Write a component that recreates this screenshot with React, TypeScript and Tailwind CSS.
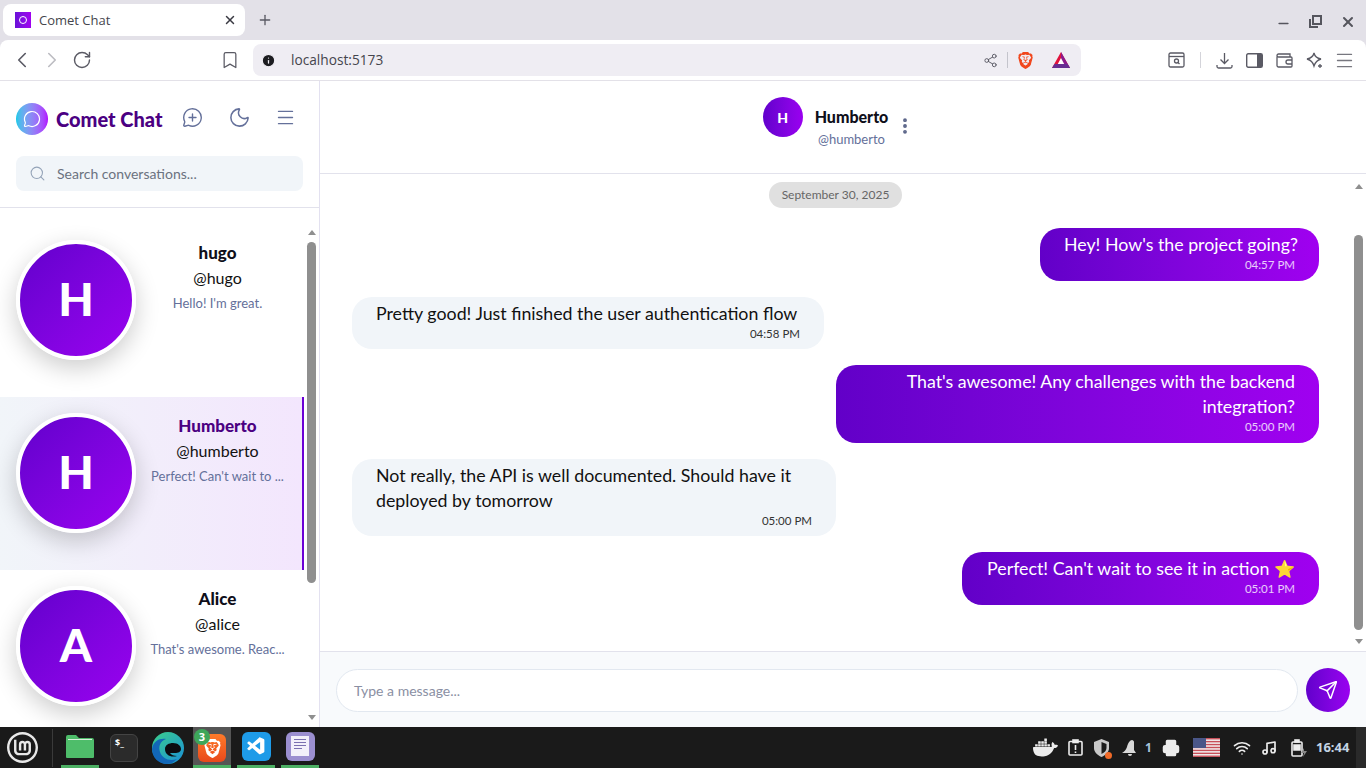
import { ChevronLeft, ChevronRight, Bookmark, Info, Menu, MessageCircle, MessageCirclePlus, Minus, Moon, MoreVertical, Music, Plus, Printer, RotateCw, Search, Send, Share2, Wifi, X } from 'lucide-react'
import { SiBrave, SiDocker, SiLinuxmint } from 'react-icons/si'
import { VscVscode } from 'react-icons/vsc'

interface Conversation {
  name: string
  handle: string
  last: string
  active?: boolean
}

interface Message {
  text: React.ReactNode
  time: string
  mine: boolean
  width: string
}

const conversations: Conversation[] = [
  { name: 'hugo', handle: '@hugo', last: "Hello! I'm great." },
  { name: 'Humberto', handle: '@humberto', last: "Perfect! Can't wait to ...", active: true },
  { name: 'Alice', handle: '@alice', last: "That's awesome. Reac..." },
]

const messages: Message[] = [
  { text: "Hey! How's the project going?", time: '04:57 PM', mine: true, width: 'w-[279px]' },
  { text: 'Pretty good! Just finished the user authentication flow', time: '04:58 PM', mine: false, width: 'w-[472px]' },
  { text: <>That's awesome! Any challenges with the backend<br />integration?</>, time: '05:00 PM', mine: true, width: 'w-[483px]' },
  { text: <>Not really, the API is well documented. Should have it<br />deployed by tomorrow</>, time: '05:00 PM', mine: false, width: 'w-[484px]' },
  { text: <>Perfect! Can't wait to see it in action <span className="text-[17px]">⭐</span></>, time: '05:01 PM', mine: true, width: 'w-[357px]' },
]

function ToolIcon({ children }: { children: React.ReactNode }) {
  return <div className="w-[30px] h-[30px] flex items-center justify-center text-[#5a5a64] shrink-0">{children}</div>
}

function BatIcon() {
  return (
    <svg width="18" height="16" viewBox="0 0 18 16">
      <path d="M9 0 L18 16 H0 Z" fill="#e0123c" />
      <path d="M9 0 L18 16 H13 L9 8 Z" fill="#8a1a8c" />
      <path d="M0 16 L2.5 12 H15.5 L18 16 Z" fill="#662d91" />
      <path d="M9 6 L12.2 12 H5.8 Z" fill="#fff" />
    </svg>
  )
}

function Flag() {
  const stripes = [0, 1, 2, 3, 4, 5, 6]
  return (
    <svg width="27" height="19" viewBox="0 0 27 19">
      <rect width="27" height="19" fill="#f4f4f4" />
      {stripes.map(i => <rect key={i} y={i * 2.92} width="27" height="1.46" fill="#c8505a" />)}
      <rect width="13" height="10" fill="#4a5688" />
    </svg>
  )
}

function Scrollbar({ topClass, thumbClass, pad }: { topClass: string; thumbClass: string; pad: string }) {
  return (
    <div className={`w-[15px] shrink-0 flex flex-col items-center ${pad}`}>
      <div className="w-0 h-0 border-x-[4px] border-x-transparent border-b-[5px] border-b-[#8f8f8f]" />
      <div className={`w-[9px] rounded-full bg-[#8f8f8f] ${topClass} ${thumbClass}`} />
      <div className="mt-auto w-0 h-0 border-x-[4px] border-x-transparent border-t-[5px] border-t-[#8f8f8f]" />
    </div>
  )
}

function ConversationItem({ item }: { item: Conversation }) {
  return (
    <div className={`h-[173px] shrink-0 flex pl-4 pt-4 ${item.active ? 'bg-linear-to-r from-[#f1f5f9] to-[#f3e6fd] border-r-2 border-r-[#6a00d5]' : ''}`}>
      <div className="w-[120px] h-[120px] shrink-0 rounded-full border-4 border-white bg-linear-to-br from-[#6200cc] to-[#9a00f0] shadow-[0_8px_24px_rgba(0,0,0,0.2)] flex items-center justify-center text-white text-[46px] leading-none pb-0.5 font-black">
        {item.name[0].toUpperCase()}
      </div>
      <div className="ml-3 w-[139px] pt-px text-center whitespace-nowrap">
        <div className={`text-[17px] leading-6 font-black ${item.active ? 'text-[#4b0082]' : 'text-[#0f0f1a]'}`}>{item.name}</div>
        <div className="mt-px text-[16px] leading-6 text-[#111]">{item.handle}</div>
        <div className="mt-[3px] text-[13px] leading-5 text-[#64709a]">{item.last}</div>
      </div>
    </div>
  )
}

function Bubble({ msg }: { msg: Message }) {
  return (
    <div
      className={`${msg.width} shrink-0 rounded-[20px] px-6 pt-[4px] pb-[7.5px] ${
        msg.mine
          ? 'self-end bg-linear-to-r from-[#6200c8] to-[#a000f0] text-white text-right'
          : 'self-start bg-[#f1f5f9] text-[#111]'
      }`}
    >
      <div className="text-[17.8px] leading-[25px] whitespace-nowrap">{msg.text}</div>
      <div className={`text-[11.5px] leading-4 text-right ${msg.mine ? 'text-white/80' : 'text-[#333]'}`}>{msg.time}</div>
    </div>
  )
}

export default function App() {
  return (
    <div className="h-screen w-[1366px] overflow-hidden flex flex-col bg-[#e3e1e8] font-['Lato','Noto_Sans',sans-serif]">
      {/* tab strip */}
      <div className="h-10 shrink-0 flex items-start pt-1 pl-[3px] font-['Open_Sans',sans-serif]">
        <div className="w-[242px] h-8 rounded-lg bg-white flex items-center pl-3 pr-2">
          <div className="w-4 h-4 bg-linear-to-r from-[#6a10d8] to-[#a000f0] flex items-center justify-center">
            <div className="w-2 h-2 rounded-full border border-white" />
          </div>
          <span className="ml-2 text-[13px] text-[#45454d] pt-0.5">Comet Chat</span>
          <X size={14} strokeWidth={2.5} className="ml-auto text-[#3a3a42]" />
        </div>
        <Plus size={16} className="ml-3 mt-2 text-[#5a5a64]" />
        <div className="ml-auto flex items-center gap-[18px] pr-[10px] pt-2 text-[#55555d]">
          <Minus size={15} strokeWidth={2.5} className="mt-1" />
          <svg width="13" height="13" viewBox="0 0 13 13" fill="none" stroke="currentColor" strokeWidth="2">
            <rect x="4" y="1" width="8" height="8" />
            <path d="M1 4v8h8" />
          </svg>
          <X size={16} strokeWidth={3} />
        </div>
      </div>

      {/* browser toolbar */}
      <div className="h-[41px] shrink-0 bg-white rounded-t-lg border-b border-[#e3e1e8] flex items-center pl-[7px] font-['Open_Sans',sans-serif]">
        <ToolIcon><ChevronLeft size={26} strokeWidth={1.5} /></ToolIcon>
        <ToolIcon><ChevronRight size={26} strokeWidth={1.5} className="text-[#bcbcc2]" /></ToolIcon>
        <ToolIcon><RotateCw size={20} strokeWidth={1.7} /></ToolIcon>
        <div className="ml-[118px]"><ToolIcon><Bookmark size={20} strokeWidth={1.5} /></ToolIcon></div>
        <div className="ml-2 w-[828px] h-8 rounded-lg bg-[#efedf3] flex items-center pl-2 pr-[11px]">
          <Info size={15} fill="#1c1c20" stroke="#efedf3" />
          <span className="ml-[15px] text-[13.7px] text-[#45454d]">localhost:5173</span>
          <Share2 size={15} strokeWidth={1.5} className="ml-auto text-[#5a5a64]" />
          <div className="ml-[9px] w-px h-4 bg-[#c4c4cc]" />
          <SiBrave size={17} className="ml-[9px] text-[#f1471d]" />
          <div className="ml-[18px] flex"><BatIcon /></div>
        </div>
        <div className="ml-[80px]">
          <ToolIcon>
            <svg width="17" height="16" viewBox="0 0 17 16" fill="none" stroke="currentColor" strokeWidth="1.3">
              <rect x="1" y="1" width="15" height="14" rx="1.5" />
              <path d="M1 4.5h15" />
              <circle cx="8.5" cy="9" r="2" />
              <path d="M10 10.5l1.500 1.500" />
            </svg>
          </ToolIcon>
        </div>
        <div className="w-[18px] flex justify-center"><div className="w-px h-4 bg-[#d4d4da]" /></div>
        <ToolIcon>
          <svg width="17" height="17" viewBox="0 0 17 17" fill="none" stroke="currentColor" strokeWidth="1.3">
            <path d="M8.500 1v10M4.500 7.500l4 4 4-4" />
            <path d="M1 13v1.500a1.500 1.500 0 0 0 1.500 1.500h12a1.500 1.500 0 0 0 1.500-1.500V13" />
          </svg>
        </ToolIcon>
        <ToolIcon>
          <svg width="17" height="15" viewBox="0 0 17 15">
            <rect x="0.7" y="0.7" width="15.6" height="13.6" rx="1.500" fill="none" stroke="currentColor" strokeWidth="1.4" />
            <rect x="11" y="1" width="5" height="13" fill="currentColor" />
          </svg>
        </ToolIcon>
        <ToolIcon>
          <svg width="17" height="15" viewBox="0 0 17 15" fill="none" stroke="currentColor" strokeWidth="1.3">
            <path d="M1 3.500V12.500a1.500 1.500 0 0 0 1.500 1.500H15a1 1 0 0 0 1-1V5a1 1 0 0 0-1-1H2.500A1.500 1.500 0 0 1 1 2.500 1.500 1.500 0 0 1 2.500 1H14v3" />
            <path d="M16 7h-4a2 2 0 0 0 0 4h4" />
          </svg>
        </ToolIcon>
        <ToolIcon>
          <svg width="17" height="17" viewBox="0 0 17 17" fill="none" stroke="currentColor" strokeWidth="1.3">
            <path d="M8 1c.8 3.500 2.500 5.200 7 6-3.600 1-5.600 2.600-7 7-1.200-4.400-3.200-6-7-7 4.200-.8 6.200-2.500 7-6z" />
            <path d="M14 12v4M12 14h4" />
          </svg>
        </ToolIcon>
        <ToolIcon><Menu size={21} strokeWidth={1.5} className="text-[#77777f]" /></ToolIcon>
      </div>

      {/* app */}
      <div className="flex-1 min-h-0 flex bg-white">
        <aside className="w-[320px] shrink-0 border-r border-[#e3e1f0] flex flex-col">
          <div className="shrink-0 h-[127px] border-b border-[#e2e2ec] px-4 pt-[22px]">
            <div className="flex items-center h-8">
              <div className="w-8 h-8 rounded-full bg-linear-to-r from-[#00c8e8] to-[#b000ff] flex items-center justify-center">
                <MessageCircle size={18} strokeWidth={1.6} className="text-white" />
              </div>
              <span className="ml-2 text-[20px] font-black text-[#4b0082] whitespace-nowrap">Comet Chat</span>
              <MessageCirclePlus size={21} strokeWidth={1.6} className="ml-[20px] mb-1 text-[#64709a]" />
              <Moon size={23} strokeWidth={1.6} className="ml-[25px] mb-1 text-[#64709a]" />
              <Menu size={21} strokeWidth={1.6} className="ml-[24px] mb-1 text-[#64709a]" />
            </div>
            <div className="mt-[21px] h-[35px] rounded-lg bg-[#f1f5f9] flex items-center pl-[13px] w-[287px]">
              <Search size={17} strokeWidth={1.5} className="text-[#94a3b8]" />
              <span className="ml-[11px] text-[14px] text-[#6b7280]">Search conversations...</span>
            </div>
          </div>
          <div className="flex-1 min-h-0 flex">
            <div className="w-[304px] shrink-0 pt-4 flex flex-col overflow-hidden">
              {conversations.map(c => <ConversationItem key={c.name} item={c} />)}
            </div>
            <Scrollbar pad="pt-[22px] pb-[7px]" topClass="mt-[7px]" thumbClass="h-[341px]" />
          </div>
        </aside>

        <main className="flex-1 min-w-0 flex flex-col">
          <div className="h-[93px] shrink-0 border-b border-[#e2e2ec] flex justify-center pt-4 pr-[8px]">
            <div className="w-10 h-10 rounded-full bg-linear-to-r from-[#6200cc] to-[#9a00f0] flex items-center justify-center text-white text-[14px] font-black">H</div>
            <div className="ml-3 text-center">
              <div className="text-[16px] leading-6 mt-2 font-black text-[#0f0f1a]">Humberto</div>
              <div className="text-[13px] leading-5 text-[#64709a]">@humberto</div>
            </div>
            <MoreVertical size={20} strokeWidth={2.6} className="ml-[7px] mt-[19px] text-[#5a6488]" />
          </div>

          <div className="flex-1 min-h-0 flex">
            <div className="flex-1 min-w-0 px-8 pt-2 flex flex-col gap-4">
              <div className="self-center shrink-0 w-[133px] h-[26px] mb-1 rounded-full bg-[#e0e0e0] text-[12px] text-[#666] flex items-center justify-center">September 30, 2025</div>
              {messages.map((m, i) => <Bubble key={i} msg={m} />)}
            </div>
            <Scrollbar pad="pt-[10px] pb-[7px]" topClass="mt-[46px]" thumbClass="h-[395px]" />
          </div>

          <div className="h-[76px] shrink-0 border-t border-[#e2e2ec] bg-[#f8fafc] flex items-start pt-4 pl-4">
            <div className="w-[962px] h-[43px] mt-px rounded-full bg-white border border-[#e2e8f0] flex items-center pl-[17px] text-[14px] text-[#8a8fa3]">Type a message...</div>
            <div className="ml-2 w-11 h-11 rounded-full bg-linear-to-r from-[#6200cc] to-[#9a00f0] flex items-center justify-center">
              <Send size={20} strokeWidth={1.8} className="text-white" />
            </div>
          </div>
        </main>
      </div>

      {/* desktop panel */}
      <div className="h-[41px] shrink-0 bg-[#1a1a1a] flex items-center text-white font-['Noto_Sans',sans-serif]">
        <div className="w-[44px] mr-[8px] flex justify-center"><SiLinuxmint size={31} className="text-[#e8e8e8]" /></div>
        <div className="w-px h-[38px] bg-[#3a3a3a]" />
        <div className="w-[8px]" />
        <div className="w-[38px] h-full flex flex-col items-center justify-center border-b-[3px] border-b-[#4caf63]">
          <svg width="28" height="26" viewBox="0 0 28 26"><path d="M0 4a2 2 0 0 1 2-2h8l3 3h13a2 2 0 0 1 2 2v17a1 1 0 0 1-1 1H1a1 1 0 0 1-1-1z" fill="#4ebd6a" /><rect x="2" y="6" width="24" height="1" fill="#d8f0dc" /></svg>
        </div>
        <div className="w-[6px]" />
        <div className="w-[38px] h-full flex items-center justify-center">
          <div className="w-7 h-7 rounded-md bg-[#2b2b2b] border border-[#444] text-[9px] font-bold leading-3 pl-1 pt-0.5">$_</div>
        </div>
        <div className="w-[6px]" />
        <div className="w-[38px] h-full flex items-center justify-center">
          <svg width="32" height="32" viewBox="0 0 32 32">
            <defs>
              <linearGradient id="edgeA" x1="0" y1="0" x2="1" y2="1"><stop offset="0" stopColor="#3bd08a" /><stop offset="1" stopColor="#1a8fd8" /></linearGradient>
            </defs>
            <circle cx="16" cy="16" r="16" fill="url(#edgeA)" />
            <path d="M0 17C1 9 8 6 14 7c-6 2-8 8-6 13 2 6 9 10 17 7-3 3-6 5-10 5C6 32 0 25 0 17z" fill="#1267b8" />
            <path d="M13 17c0-4 4-6 8-6 5 0 8 3 8 6s-3 4-6 4h-5c1 2 4 3 7 3-6 2-12-1-12-7z" fill="#0c0c10" />
          </svg>
        </div>
        <div className="w-[6px]" />
        <div className="relative w-[38px] h-full flex items-center justify-center bg-[#555] border-b-[3px] border-b-[#4caf63]">
          <div className="w-7 h-7 rounded-md bg-linear-to-b from-[#ff7a2a] to-[#e8481c] flex items-center justify-center mt-1">
            <SiBrave size={19} className="text-white" />
          </div>
          <div className="absolute left-[1px] top-[2px] w-4 h-4 rounded-full bg-[#3ea65a] text-[11px] leading-4 text-center font-bold">3</div>
        </div>
        <div className="w-[6px]" />
        <div className="w-[38px] h-full flex items-center justify-center border-b-[3px] border-b-[#4caf63]">
          <div className="w-[29px] h-[29px] rounded-md bg-[#1e9be8] flex items-center justify-center"><VscVscode size={21} className="text-white" /></div>
        </div>
        <div className="w-[6px]" />
        <div className="w-[38px] h-full flex items-center justify-center border-b-[3px] border-b-[#4caf63]">
          <div className="w-[29px] h-[29px] rounded-md bg-[#9b8fd0] flex items-center justify-center">
            <div className="w-[18px] h-[20px] bg-[#f2f0fa] flex flex-col gap-[2px] px-[3px] pt-[3px]">
              <div className="h-px bg-[#7a70b0]" /><div className="h-px bg-[#7a70b0]" /><div className="h-px bg-[#7a70b0]" /><div className="h-px w-2 bg-[#7a70b0]" />
            </div>
          </div>
        </div>

        <div className="ml-auto flex items-center h-full text-[#ececec]">
          <SiDocker size={25} />
          <div className="ml-[10px]">
            <svg width="15" height="17" viewBox="0 0 15 17" fill="none" stroke="currentColor" strokeWidth="1.6"><rect x="1" y="2.500" width="13" height="13.500" rx="1" /><rect x="5" y="1" width="5" height="2.500" fill="currentColor" /><path d="M7.500 6v5M7.500 12.500v1.500" /></svg>
          </div>
          <div className="ml-[10px] relative">
            <svg width="17" height="18" viewBox="0 0 17 18" fill="#c8c8c8"><path d="M8.500 0 L16 3v6c0 4-3 7-7.500 9C4 16 1 13 1 9V3z" /><path d="M8.500 3L13.500 5v4c0 2.500-2 4.500-5 6z" fill="#1a1a1a" /></svg>
            <div className="absolute -right-0.5 -bottom-0.5 w-[7px] h-[7px] rounded-full bg-[#f06a28]" />
          </div>
          <div className="ml-[12px]">
            <svg width="15" height="16" viewBox="0 0 15 16" fill="#d8d8d8"><path d="M10 0c1 0 2 1 2 2v8l2 3H3c-1 0-3 0-3 0 2-1 4-3 5-6 1-4 3-7 5-7z" /><path d="M6 14h4a2 2 0 0 1-4 0z" /></svg>
          </div>
          <span className="ml-[8px] w-[9px] text-[12px] font-bold text-[#a8c4de]">1</span>
          <Printer size={18} fill="currentColor" className="ml-[8px]" />
          <div className="ml-[13px] flex"><Flag /></div>
          <Wifi size={18} strokeWidth={2.2} className="ml-[13px]" />
          <Music size={16} strokeWidth={2.5} className="ml-[10px]" />
          <div className="ml-[14px]">
            <svg width="16" height="18" viewBox="0 0 16 18" fill="none" stroke="currentColor" strokeWidth="1.6"><rect x="1" y="3" width="10" height="14" rx="1" /><rect x="4" y="1" width="4" height="2" fill="currentColor" /><path d="M3 6h6v5H3z" fill="currentColor" /><path d="M13 9l-3 5h3l-1 4 4-6h-3z" fill="#888" stroke="none" /></svg>
          </div>
          <span className="ml-[9px] text-[13px] font-bold text-[#c4d4e4] w-[40px]">16:44</span>
          <div className="w-[10px] h-full bg-[#2a2a2a]" />
        </div>
      </div>
    </div>
  )
}
